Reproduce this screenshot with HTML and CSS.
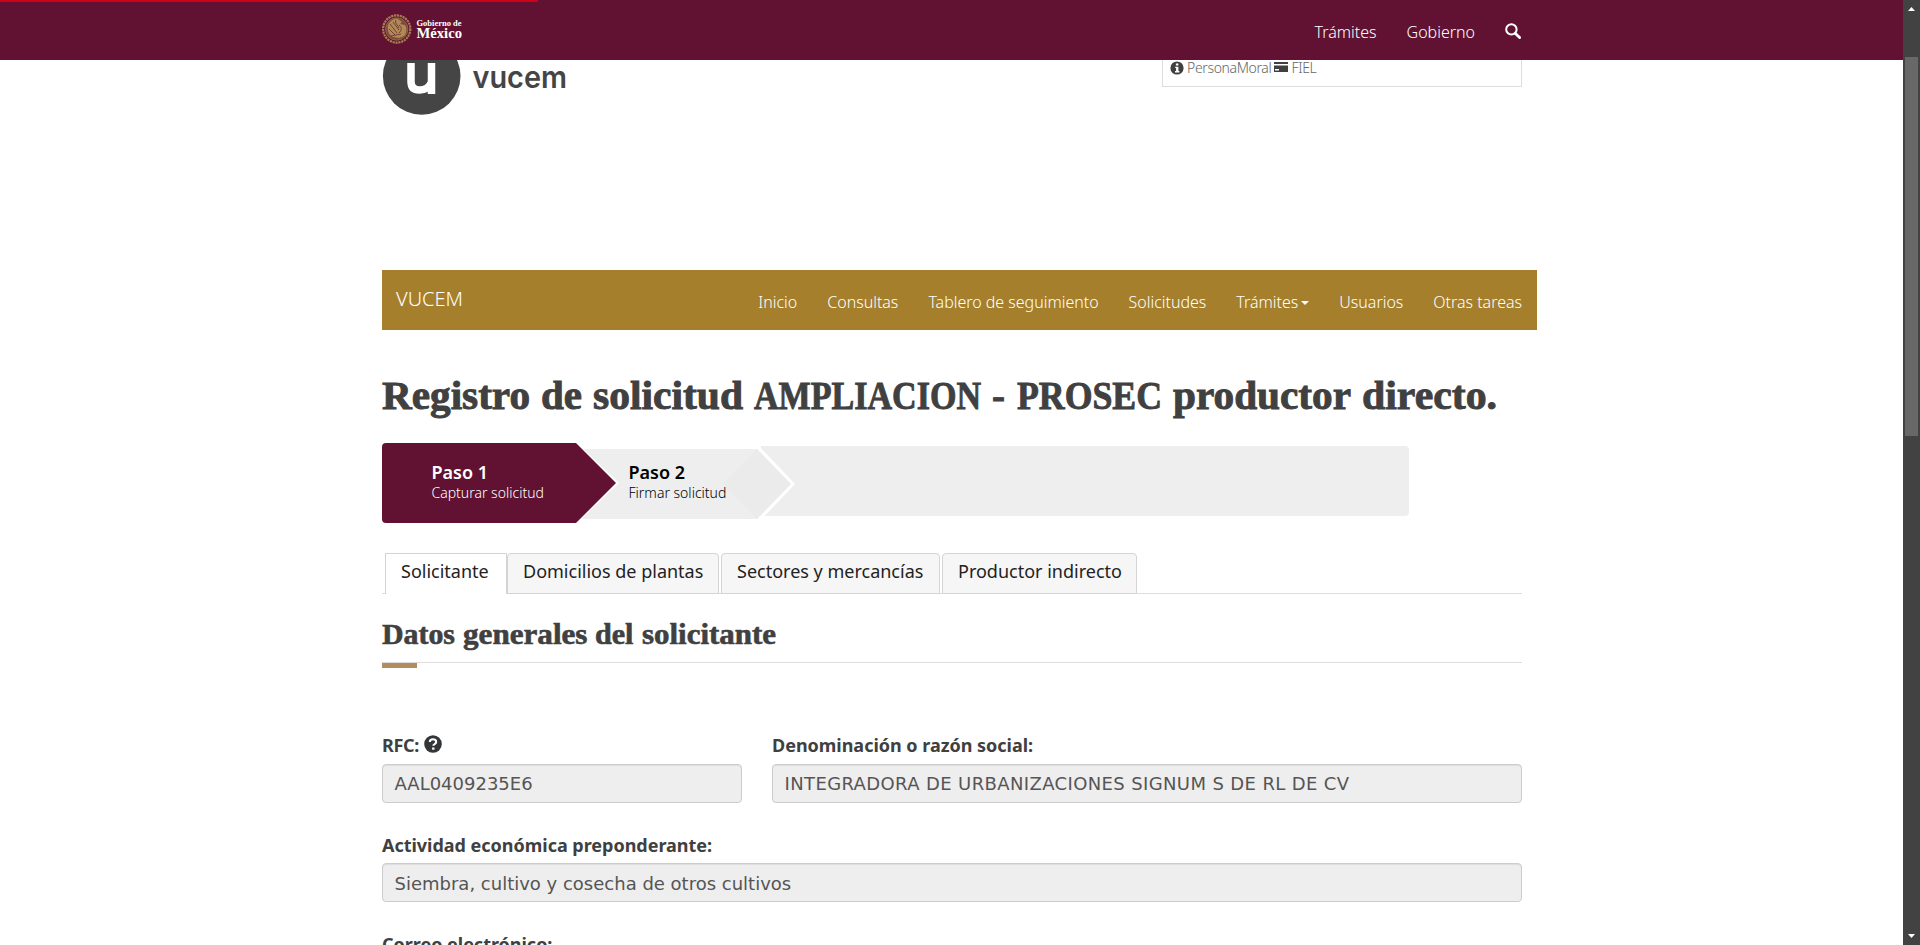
FILE: index.html
```
<!DOCTYPE html>
<html lang="es">
<head>
<meta charset="utf-8">
<title>VUCEM</title>
<link rel="stylesheet" href="styles.css">
</head>
<body>
<div class="page">
  <header class="topbar">
    <div class="progress"></div>
    <div class="topbar-inner">
      <svg class="gob-logo" width="84" height="32" viewBox="0 0 84 32">
        <circle cx="14.7" cy="16" r="13.6" fill="none" stroke="#a5804f" stroke-width="2.2" stroke-dasharray="2.2 .7"/>
        <circle cx="14.7" cy="16" r="11.2" fill="#7d4a3c" stroke="#9a714a" stroke-width=".8"/>
        <path d="M6 12c2-4 6-7 10-6l4 3-2 2 5 1c2 3 2 8-1 11l-5 2-6-1c-4-2-6-7-5-12z" fill="#b08a55"/>
        <path d="M8 11l7 9M11 9l6 8M7 16l6 6M17 12c3 2 3 5 0 8M9 23l10-2M14 7c-2 3 2 5 3 8" fill="none" stroke="#6a2935" stroke-width=".8"/>
        <text class="gob-small" x="34.5" y="13.300" textLength="45" lengthAdjust="spacingAndGlyphs">Gobierno de</text>
        <text class="gob-big" x="34.500" y="24.500" textLength="45.500" lengthAdjust="spacingAndGlyphs">México</text>
      </svg>
      <nav class="topnav">
        <a class="t-tramites">Trámites</a>
        <a class="t-gobierno">Gobierno</a>
        <svg class="search" width="16" height="16" viewBox="0 0 16 16"><circle cx="6.4" cy="6.4" r="5.2" fill="none" stroke="#fff" stroke-width="2"/><path d="M10.4 10.4l4.2 4.2" stroke="#fff" stroke-width="2.8" stroke-linecap="round"/></svg>
      </nav>
    </div>
  </header>

  <main class="content">
    <div class="brand">
      <svg class="vucem-logo" width="190" height="86" viewBox="0 0 190 86">
        <circle cx="39.7" cy="46" r="38.8" fill="#454545"/>
        <path d="M29 33v18.500q0 8.500 8.500 8.500q9 0 12-8M49.500 33v31" fill="none" stroke="#fff" stroke-width="7.500"/>
        <text class="vucem-word" x="90.500" y="58" textLength="94.500" lengthAdjust="spacingAndGlyphs">vucem</text>
      </svg>
      <div class="user-box">
        <svg width="14" height="14" viewBox="0 0 14 14"><circle cx="7" cy="7" r="6.600" fill="#404041"/><path d="M5.900 2.500h2.500v2H5.900zM5.200 5.700h3.200v4.400h1v1.400H5v-1.400h1.100V7H5.200z" fill="#fff"/></svg>
        <span class="u-moral">PersonaMoral</span>
        <svg width="14" height="14" viewBox="0 0 14 14"><path d="M0 1h14v2H0zM0 4.500h14V11H0z" fill="#404041"/><path d="M1 8h4v1.500H1z" fill="#fff"/></svg>
        <span class="u-fiel">FIEL</span>
      </div>
    </div>

    <nav class="goldbar">
      <a class="gold-brand">VUCEM</a>
      <div class="gold-links">
        <a>Inicio</a><a>Consultas</a><a>Tablero de seguimiento</a><a>Solicitudes</a><a>Trámites<i class="caret"></i></a><a>Usuarios</a><a>Otras tareas</a>
      </div>
    </nav>

    <h1 class="title">
      <svg class="words" width="1140" height="56" viewBox="0 0 1140 56">
        <g transform="translate(0 43)">
          <text x="0" textLength="148" lengthAdjust="spacingAndGlyphs">Registro</text>
          <text x="159" textLength="41" lengthAdjust="spacingAndGlyphs">de</text>
          <text x="211" textLength="150" lengthAdjust="spacingAndGlyphs">solicitud</text>
          <text x="372" textLength="227" lengthAdjust="spacingAndGlyphs">AMPLIACION</text>
          <text x="610" textLength="13" lengthAdjust="spacingAndGlyphs">-</text>
          <text x="635" textLength="145" lengthAdjust="spacingAndGlyphs">PROSEC</text>
          <text x="791" textLength="178" lengthAdjust="spacingAndGlyphs">productor</text>
          <text x="980" textLength="135" lengthAdjust="spacingAndGlyphs">directo.</text>
        </g>
      </svg>
    </h1>

    <div class="steps">
      <svg class="step-shapes" width="1028" height="80" viewBox="0 0 1028 80">
        <path d="M379 3h644a4 4 0 0 1 4 4v62a4 4 0 0 1-4 4H379z" fill="#eee"/>
        <path d="M150 0H374L413 41 376 80H150z" fill="#fff"/>
        <path d="M150 6H375L409 41 375 76H150z" fill="#eee"/>
        <path d="M375 6L409 41 375 76 340 41z" fill="#ebebeb"/>
        <path d="M195 0L237 40 195 80H150V0z" fill="#fff"/>
        <path d="M4 0H194L234 40 194 80H4a4 4 0 0 1-4-4V4a4 4 0 0 1 4-4z" fill="#611232"/>
      </svg>
      <div class="step step-on"><b>Paso 1</b><span>Capturar solicitud</span></div>
      <div class="step"><b>Paso 2</b><span>Firmar solicitud</span></div>
    </div>

    <div class="tabs">
      <a class="tab tab-active">Solicitante</a><a class="tab tab-dom">Domicilios de plantas</a><a class="tab tab-sec">Sectores y mercancías</a><a class="tab tab-prod">Productor indirecto</a>
    </div>

    <h3 class="section">
      <svg class="words words-small" width="420" height="40" viewBox="0 0 420 40">
        <g transform="translate(0 30)">
          <text x="0" textLength="73" lengthAdjust="spacingAndGlyphs">Datos</text>
          <text x="81" textLength="124.500" lengthAdjust="spacingAndGlyphs">generales</text>
          <text x="213" textLength="38.500" lengthAdjust="spacingAndGlyphs">del</text>
          <text x="260" textLength="134" lengthAdjust="spacingAndGlyphs">solicitante</text>
        </g>
      </svg>
    </h3>
    <div class="accent"></div>

    <div class="form">
      <div class="field rfc">
        <label>RFC:<svg class="help" width="18" height="18" viewBox="0 0 18 18"><circle cx="9" cy="9" r="8.800" fill="#333536"/><path d="M5.800 7q0-2.700 3.200-2.700T12.200 7q0 1.200-1.600 2.100-1.300.7-1.300 1.700" fill="none" stroke="#fff" stroke-width="2"/><path d="M8.100 12.500h2.400v2.200H8.100z" fill="#fff"/></svg></label>
        <div class="input">AAL0409235E6</div>
      </div>
      <div class="field">
        <label>Denominación o razón social:</label>
        <div class="input input-name">INTEGRADORA DE URBANIZACIONES SIGNUM S DE RL DE CV</div>
      </div>
      <div class="field wide">
        <label>Actividad económica preponderante:</label>
        <div class="input input-activity">Siembra, cultivo y cosecha de otros cultivos</div>
      </div>
      <div class="field wide">
        <label>Correo electrónico:</label>
      </div>
    </div>
  </main>

  <div class="scrollbar">
    <svg width="7" height="4" viewBox="0 0 7 4"><path d="M3.500 0L7 4H0z" fill="#fff"/></svg>
    <div class="thumb"></div>
    <svg class="down" width="7" height="4" viewBox="0 0 7 4"><path d="M3.500 4L7 0H0z" fill="#fff"/></svg>
  </div>
</div>
</body>
</html>
```
FILE: styles.css
```
* { box-sizing: border-box; }
body {
  margin: 0;
  background: #fff;
  color: #404041;
  font-family: "Noto Sans", "Open Sans", sans-serif;
}
.page { position: relative; height: 945px; overflow: hidden; }

.topbar {
  position: absolute;
  inset: 0 17px auto 0;
  z-index: 2;
  height: 60px;
  background: #611232;
}
.progress { width: 538px; height: 2px; background: #d0021b; }
.topbar-inner {
  display: flex;
  justify-content: space-between;
  width: 1139px;
  margin-left: 382px;
  padding-top: 11px;
}
.gob-small { font: 700 7.5px "Liberation Serif", serif; fill: #fff; }
.gob-big { font: 700 14px "Liberation Serif", serif; fill: #fff; }
.topnav { display: flex; gap: 30px; padding-top: 7px; color: #fff; font-size: 16px; font-weight: 300; line-height: 24px; }
.search { margin-top: 3px; }

.content { width: 1155px; margin-left: 382px; padding-top: 30px; }
.brand { display: flex; justify-content: space-between; width: 1140px; height: 240px; }
.vucem-logo { overflow: visible; }
.vucem-word { font: 600 31px Inter, Arial, sans-serif; fill: #454545; }
.user-box {
  display: flex;
  align-items: center;
  gap: 3px;
  width: 360px;
  height: 57px;
  padding: 18px 9px 0 7px;
  border: 1px solid #ddd;
  color: #666;
  font-size: 14px;
  font-weight: 300;
  letter-spacing: -.35px;
}

.goldbar {
  display: flex;
  justify-content: space-between;
  height: 60px;
  padding: 0 15px 0 14px;
  background: #a57f2c;
  color: #fff;
  font-weight: 300;
}
.gold-brand { font-size: 20px; line-height: 58px; }
.gold-links { display: flex; gap: 30px; font-size: 16px; letter-spacing: -.015px; line-height: 64px; }
.caret {
  display: inline-block;
  margin-left: 3px;
  vertical-align: 3px;
  border: 4px solid transparent;
  border-top-color: #fff;
  border-bottom: 0;
}

.title, .section { margin: 0; font-weight: 700; }
.title { height: 113px; padding-top: 36px; }
.words {
  display: block;
  fill: #404041;
  stroke: #404041;
  stroke-width: .9px;
  font-family: "Liberation Serif", serif;
  font-size: 40px;
}
.words-small { font-size: 29px; stroke-width: .6px; }

.steps { position: relative; display: flex; height: 80px; padding: 17px 0 0 49.5px; }
.step-shapes { position: absolute; left: 0; top: 0; }
.step { position: relative; width: 197px; color: #000; }
.step b { display: block; font-size: 18px; font-weight: 600; line-height: 25px; }
.step span { display: block; font-size: 14px; font-weight: 300; line-height: 16px; }
.step-on { color: #fff; }

.tabs {
  display: flex;
  gap: 2px;
  width: 1140px;
  height: 41px;
  margin-top: 30px;
  padding-left: 3px;
  border-bottom: 1px solid #ddd;
}
.tab {
  height: 41px;
  padding-left: 15px;
  background: #f6f6f6;
  border: 1px solid #d4d4d4;
  border-radius: 4px 4px 0 0;
  color: #222;
  font-size: 18px;
  line-height: 35px;
  white-space: nowrap;
}
.tab-active { width: 122px; margin-right: -2px; background: #fff; border-bottom: 0; border-radius: 0; }
.tab-dom { width: 212px; }
.tab-sec { width: 219px; }
.tab-prod { width: 195px; }

.section { width: 1140px; height: 69px; padding-top: 20px; border-bottom: 1px solid #ddd; }
.accent { width: 35px; height: 5px; background: #b38e5d; }

.form { display: grid; grid-template-columns: 360px 750px; column-gap: 30px; row-gap: 30px; margin-top: 65px; }
.wide { grid-column: 1 / 3; }
.field label { display: flex; height: 31px; font-size: 18px; font-weight: 700; line-height: 25px; letter-spacing: -.02px; white-space: nowrap; }
.rfc label { letter-spacing: -.3px; }
.help { margin: 2px 0 0 5px; }
.wide label { height: 30px; }
.input {
  height: 39px;
  padding-left: 11.5px;
  background: #eee;
  border: 1px solid #ccc;
  border-radius: 4px;
  box-shadow: inset 0 1px 1px rgba(0, 0, 0, .075);
  color: #555;
  font: 18px/37px "DejaVu Sans", Verdana, sans-serif;
  white-space: nowrap;
}
.input-name { letter-spacing: .375px; }
.input-activity { line-height: 39px; }

.scrollbar {
  position: absolute;
  inset: 0 0 0 auto;
  display: flex;
  flex-direction: column;
  align-items: center;
  width: 17px;
  padding: 7px 0;
  background: #424242;
}
.thumb { width: 13px; height: 379px; margin-top: 46px; background: #686868; }
.down { margin-top: auto; }
```
